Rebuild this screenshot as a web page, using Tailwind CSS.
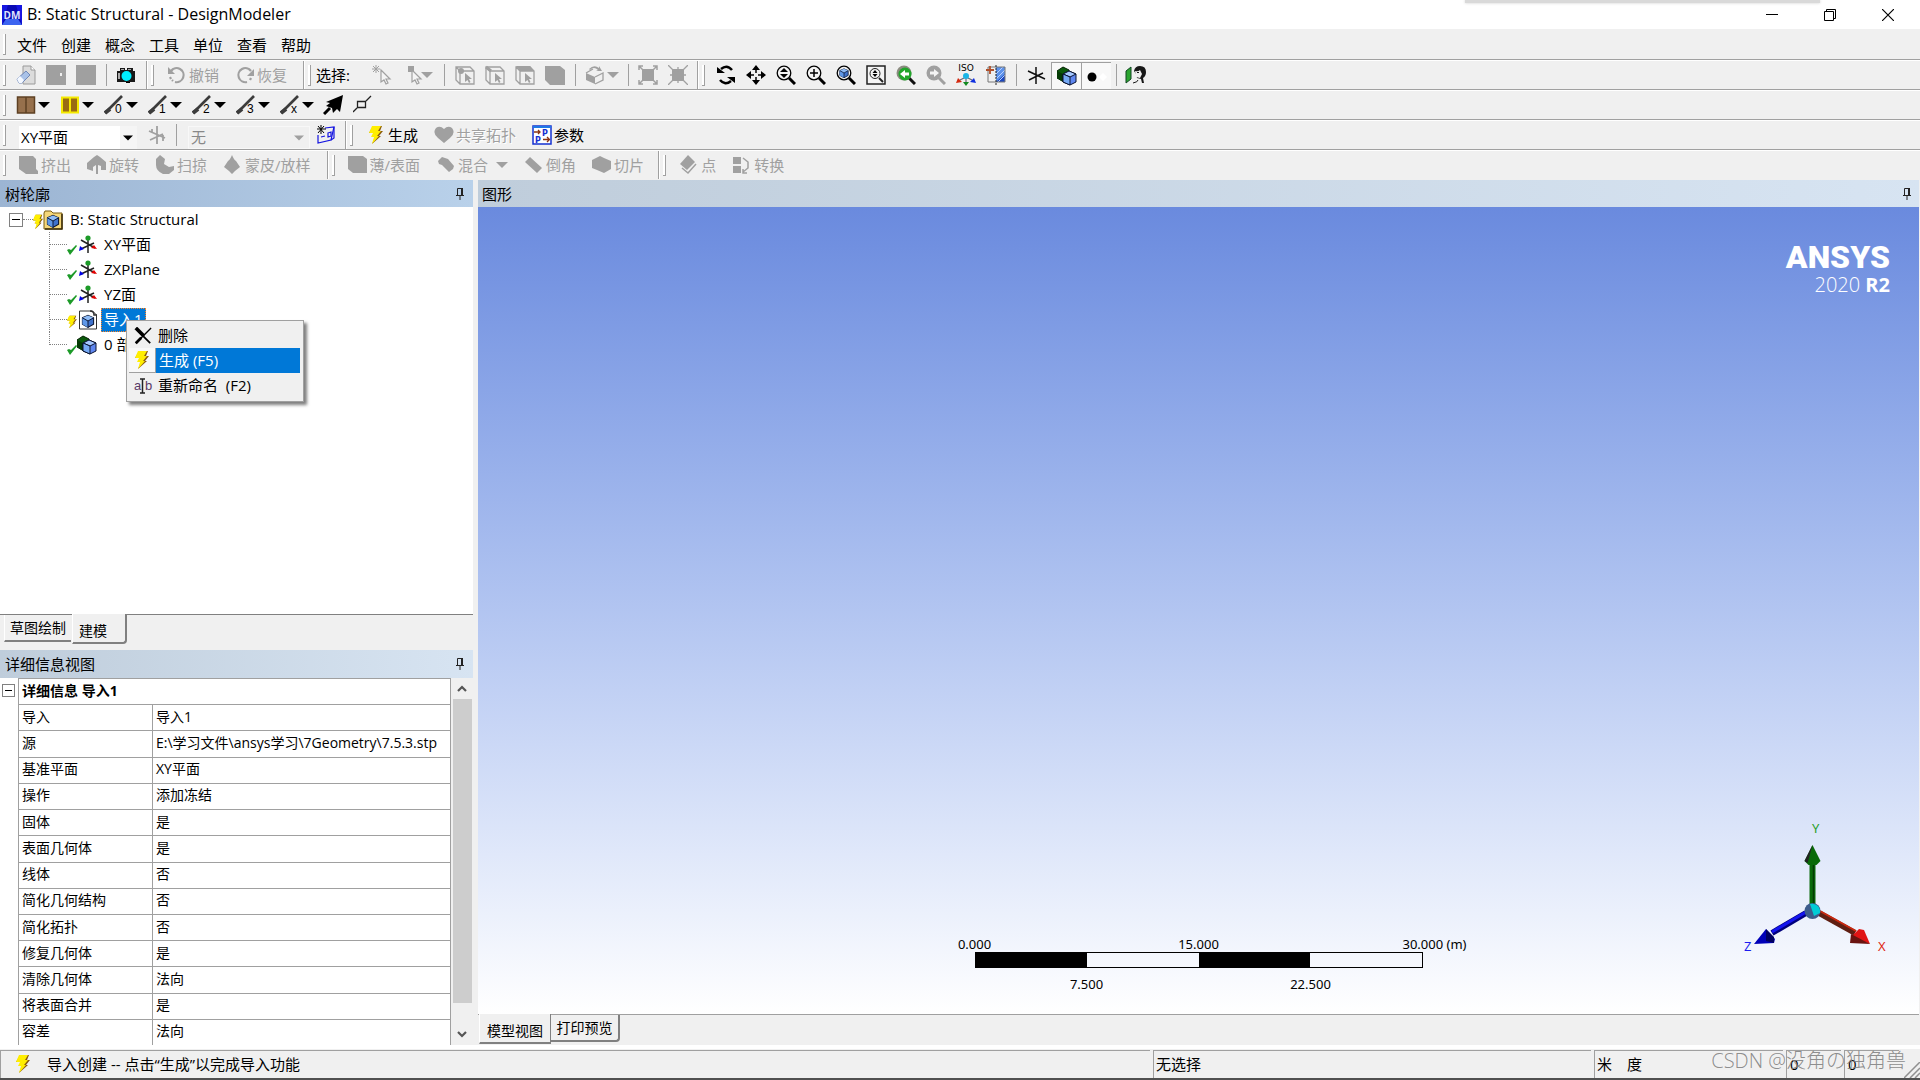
<!DOCTYPE html>
<html lang="zh-CN">
<head>
    <meta charset="UTF-8">
    <title>B: Static Structural - DesignModeler</title>
    <script src="https://cdn.jsdelivr.net/npm/@tailwindcss/browser@4"></script>
</head>

<body class="h-screen overflow-hidden flex flex-col bg-[#f0f0f0] text-black text-[15px] leading-5 font-['Open_Sans','Noto_Sans_CJK_SC',sans-serif] relative">

<!-- Иконки -->
<svg class="hidden">
    <symbol id="bolt" viewBox="0 0 20 20"><path d="M7 1h9l-2 5h3l-4 5h2L6 19l3-7H6l2-4H3z" fill="#8a5a10"/><path d="M6 1h9l-3 5h3l-4 5h2l-7 8 2-7H5l2-4H3z" fill="#ffee00"/></symbol>
    <symbol id="down" viewBox="0 0 12 6"><path d="M0 0h12L6 6z" fill="currentColor"/></symbol>
    <symbol id="pin" viewBox="0 0 10 14"><path d="M2.500 1.500h5v7h-5zM1 8.500h8M5 9v4" fill="none" stroke="#222"/><path d="M6 1h2v7H6z" fill="#222"/></symbol>
    <symbol id="glass" viewBox="0 0 20 20"><path d="M13 13l6 6" stroke="currentColor" stroke-width="3"/><circle cx="8" cy="8" r="6.800" fill="#f4f4f4" stroke="currentColor" stroke-width="1.300"/></symbol>
    <symbol id="slash" viewBox="0 0 20 20"><path d="M1 18l5-5L18 1" fill="none" stroke="#3c3c3c" stroke-width="2.600"/><path d="M1 18l5-4" stroke="#3c3c3c" stroke-width="4"/></symbol>
    <symbol id="cube" viewBox="0 0 20 20"><path d="M3 6l7-3 7 3v8l-7 4-7-4z" fill="#3f72cc" stroke="#0a1430" stroke-width="1.300"/><path d="M3 6l7-3 7 3-7 4z" fill="#8fbcf6"/><path d="M3 6l7 4v8l-7-4z" fill="#5f98e8"/><path d="M3 6l7 4 7-4M10 10v8" fill="none" stroke="#0a1430" stroke-width="1.200"/></symbol>
    <symbol id="bodies" viewBox="0 0 20 20"><path d="M0 5l6-4 6 3v9l-5 3-7-4z" fill="#0b5a0b" stroke="#032003"/><path d="M0 5l6 3v8l-6-4z" fill="#063c06"/><path d="M6 8l6-3 7 3v8l-6 3-7-3z" fill="#5e86ef" stroke="#0a1430"/><path d="M6 8l6-3 7 3-6 3z" fill="#a5c8ff" stroke="#0a1430"/><path d="M6 8l7 3v8l-7-3z" fill="#75a9f5" stroke="#0a1430"/></symbol>
    <symbol id="check" viewBox="0 0 10 10"><path d="M0 5l3 5L10 1 9 0 4 5 2 4z" fill="#1c9a28"/></symbol>
    <symbol id="axes" viewBox="0 0 20 20"><path d="M10 3v15M3 5l14 8M3 14l13-6" stroke="#222" stroke-width="1.500" fill="none"/><circle cx="10" cy="3" r="2.600" fill="#1c9a28"/><path d="M1 16l1-5 4 3z" fill="#0000e6"/><path d="M19 14l-6-1 3-3z" fill="#e60000"/></symbol>
    <symbol id="box" viewBox="0 0 20 20"><path d="M1 2h14l4 4v13H5l-4-4zM1 2l4 4v13M5 6h14" fill="none" stroke="#a0a0a0" stroke-width="1.300"/><path d="M10 8v9l2.500-2 1.500 3 1.500-1-1.500-3h3z" fill="#a0a0a0"/></symbol>
    <symbol id="arrowcur" viewBox="0 0 20 20"><path d="M9 5v12l3-2 2 4 2-1-2-4h4z" fill="#f4f4f4" stroke="#a0a0a0" stroke-width="1.200"/></symbol>
</svg>

<!-- Заголовок окна -->
<header class="flex items-center h-[29px] shrink-0 bg-white pl-[2px] relative">
    <svg class="w-5 h-5" viewBox="0 0 20 20"><path d="M0 0h20v20H0z" fill="#1616e0"/><path d="M6 0h8l6 20H0z" fill="#0a0ab4"/><path d="M0 20l4-6h12l4 6z" fill="#3c64f0"/><text x="10" y="14" text-anchor="middle" font-size="10" font-weight="700" font-family="Open Sans" fill="#dfe4ff">DM</text></svg>
    <h1 class="pl-[5px] pb-[2px] flex-1 text-base leading-5">B: Static Structural - DesignModeler</h1>
    <div class="absolute top-0 left-[76.3%] w-[355px] h-[3px] bg-[#d9d9d9] shadow-[0_0_3px_#ccc]"></div>
    <div class="flex pr-[3px]">
        <button class="w-[58px] h-[29px] flex items-center justify-center" aria-label="最小化"><svg class="w-3 h-3" viewBox="0 0 12 12"><path d="M0 5.500h12" stroke="#000"/></svg></button>
        <button class="w-[58px] h-[29px] flex items-center justify-center" aria-label="还原"><svg class="w-3 h-3" viewBox="0 0 12 12" fill="none" stroke="#000"><path d="M.5 2.500h9v9h-9zM2.500 2.500v-2h9v9h-2"/></svg></button>
        <button class="w-[58px] h-[29px] flex items-center justify-center" aria-label="关闭"><svg class="w-3 h-3" viewBox="0 0 12 12"><path d="M0 0l12 12M12 0L0 12" stroke="#000" stroke-width="1.200"/></svg></button>
    </div>
</header>

<!-- Меню -->
<nav class="flex items-center h-[31px] shrink-0 border-b border-[#a0a0a0] pt-px">
    <div class="w-[17px] pl-[3px]"><div class="w-[3px] h-[21px] border-r border-b border-[#a0a0a0] bg-white"></div></div>
    <div class="flex gap-[14px]">
        <button>文件</button>
        <button>创建</button>
        <button>概念</button>
        <button>工具</button>
        <button>单位</button>
        <button>查看</button>
        <button>帮助</button>
    </div>
</nav>

<!-- Панель 1 -->
<div class="flex h-[30px] shrink-0 border-t border-t-white border-b border-b-[#a0a0a0]">
    <div class="flex items-center border-r border-[#a0a0a0] pr-[5px]">
        <div class="w-[11px] pl-[3px]"><div class="w-[3px] h-[21px] border-r border-b border-[#a0a0a0] bg-white"></div></div>
        <button class="w-[30px] flex justify-center" aria-label="新建"><svg class="w-5 h-5" viewBox="0 0 20 20"><path d="M7 1h8l4 4v14H7z" fill="#dcdcdc" stroke="#9a9a9a"/><path d="M15 1v4h4" fill="#fff" stroke="#9a9a9a"/><path d="M1 14l9-8 4 4-8 8H3z" fill="#a9c2e8" stroke="#7088b8"/><path d="M1 14l3-3 4 4-2 3H3z" fill="#f4f8ff"/></svg></button>
        <button class="w-[30px] flex justify-center" aria-label="保存"><svg class="w-5 h-5" viewBox="0 0 20 20"><path d="M0 0h20v20H0z" fill="#a0a0a0"/><path d="M14 8h2v3h-2z" fill="#eee"/></svg></button>
        <button class="w-[30px] flex justify-center" aria-label="导出"><svg class="w-5 h-5" viewBox="0 0 20 20"><path d="M0 0h20v20H0z" fill="#a0a0a0"/></svg></button>
        <div class="w-[10px] flex justify-center"><div class="w-px h-[22px] bg-[#a0a0a0]"></div></div>
        <button class="w-[30px] flex justify-center" aria-label="截图"><svg class="w-5 h-5" viewBox="0 0 20 20"><path d="M1 6h3V3h5v2h2V3h6v3h2v11H1z" fill="#181818"/><path d="M5 4h3v1H5zM12 4h3v1h-3zM2 8h2v6H2z" fill="#aaa"/><circle cx="10.500" cy="11" r="5" fill="#00f0ff"/><path d="M10 17h4v1h-4z" fill="#000"/></svg></button>
    </div>
    <div class="flex items-center border-l border-l-white border-r border-r-[#a0a0a0] pr-2 text-[#a0a0a0] text-shadow-[1px_1px_0_#fff]">
        <div class="w-[11px] pl-[3px]"><div class="w-[3px] h-[21px] border-r border-b border-[#a0a0a0] bg-white"></div></div>
        <button class="flex items-center gap-[2px] px-2" disabled><svg class="w-5 h-5" viewBox="0 0 20 20" fill="none" stroke="currentColor" stroke-width="2.200"><path d="M4 6a7 7 0 1 1 4 11"/><path d="M1 2v7h7z" fill="currentColor" stroke="none"/><path d="M3 12l1 2M5 15l1 1"/></svg>撤销</button>
        <button class="flex items-center gap-[2px] px-2" disabled><svg class="w-5 h-5" viewBox="0 0 20 20" fill="none" stroke="currentColor" stroke-width="2.200"><path d="M16 6A7 7 0 1 0 12 17"/><path d="M19 4v7h-7z" fill="currentColor" stroke="none"/><path d="M16 13l-1 2"/></svg>恢复</button>
    </div>
    <div class="flex items-center border-l border-l-white border-r border-r-[#a0a0a0] pr-1 text-[#a0a0a0]">
        <div class="w-[11px] pl-[3px]"><div class="w-[3px] h-[21px] border-r border-b border-[#a0a0a0] bg-white"></div></div>
        <span class="w-[51px] text-black">选择:</span>
        <button class="w-[30px] flex justify-center" aria-label="新选择"><svg class="w-5 h-5" viewBox="0 0 20 20"><use href="#arrowcur"/><path d="M4 0v8M0 4h8M1 1l6 6M7 1L1 7" stroke="currentColor"/></svg></button>
        <button class="w-[42px] flex items-center pl-[8px]" aria-label="选择模式"><svg class="w-5 h-5 -mr-1" viewBox="0 0 20 20"><path d="M3 1h6v6H3z" fill="currentColor"/><use href="#arrowcur" x="-2"/></svg><svg class="w-3 h-[6px]"><use href="#down"/></svg></button>
        <div class="w-[11px] flex justify-center"><div class="w-px h-[22px] bg-[#a0a0a0]"></div></div>
        <button class="w-[30px] flex justify-center" aria-label="点"><svg class="w-5 h-5" viewBox="0 0 20 20"><use href="#box"/><circle cx="6" cy="6" r="3" fill="currentColor"/></svg></button>
        <button class="w-[30px] flex justify-center" aria-label="边"><svg class="w-5 h-5" viewBox="0 0 20 20"><use href="#box"/><path d="M1 2l5 4" stroke="currentColor" stroke-width="3"/></svg></button>
        <button class="w-[30px] flex justify-center" aria-label="面"><svg class="w-5 h-5" viewBox="0 0 20 20"><use href="#box"/><path d="M1 1h14l4 5H5z" fill="currentColor"/></svg></button>
        <button class="w-[30px] flex justify-center" aria-label="体"><svg class="w-5 h-5" viewBox="0 0 20 20"><path d="M0 1h15l5 4v15H5l-5-5z" fill="currentColor"/></svg></button>
        <div class="w-[10px] flex justify-center"><div class="w-px h-[22px] bg-[#a0a0a0]"></div></div>
        <button class="w-[43px] flex items-center pl-[5px] gap-[2px]" aria-label="扩展"><svg class="w-5 h-5" viewBox="0 0 20 20"><path d="M1 8l9 4v7l-9-4z" fill="currentColor"/><path d="M1 8l7-4M10 12l8-4v7l-8 4" fill="none" stroke="currentColor" stroke-width="1.300"/><path d="M4 4q5-5 10-1v-2l3 5h-6l2-1q-4-4-8 0z" fill="currentColor"/></svg><svg class="w-3 h-[6px]"><use href="#down"/></svg></button>
        <div class="w-[10px] flex justify-center"><div class="w-px h-[22px] bg-[#a0a0a0]"></div></div>
        <button class="w-[30px] flex justify-center" aria-label="放大选择"><svg class="w-5 h-5" viewBox="0 0 20 20"><path d="M4 4h12v12H4z" fill="currentColor"/><path d="M1 5V1h4M15 1h4v4M19 15v4h-4M5 19H1v-4M1 1l4 4M19 1l-4 4M19 19l-4-4M1 19l4-4" stroke="currentColor" stroke-width="1.500" fill="none"/></svg></button>
        <button class="w-[30px] flex justify-center" aria-label="缩小选择"><svg class="w-5 h-5" viewBox="0 0 20 20"><path d="M4 4h12v12H4z" fill="currentColor"/><path d="M0 0l6 6M20 0l-6 6M20 20l-6-6M0 20l6-6M10 2v16M2 10h16" stroke="currentColor" stroke-width="1.300"/></svg></button>
    </div>
    <div class="flex items-center border-l border-l-white">
        <div class="w-[12px] pl-[3px]"><div class="w-[3px] h-[21px] border-r border-b border-[#a0a0a0] bg-white"></div></div>
        <button class="w-[30px] flex justify-center" aria-label="旋转"><svg class="w-5 h-5" viewBox="0 0 20 20"><path d="M16 5Q11-1 5 4M4 15q5 6 11 1" fill="none" stroke="#000" stroke-width="2.500"/><path d="M1 2v6h8zM19 18v-6h-8z"/></svg></button>
        <button class="w-[30px] flex justify-center" aria-label="平移"><svg class="w-5 h-5" viewBox="0 0 20 20"><path d="M10 0l4 5H6zM10 20l4-5H6zM0 10l5-4v8zM20 10l-5-4v8z"/><path d="M10 4v4M10 12v4M4 10h4M12 10h4" stroke="#000" stroke-width="1.500"/></svg></button>
        <button class="w-[30px] flex justify-center" aria-label="缩放"><svg class="w-5 h-5" viewBox="0 0 20 20"><use href="#glass"/><path d="M8 3l4 4H4zM8 13l4-4H4z"/></svg></button>
        <button class="w-[30px] flex justify-center" aria-label="放大"><svg class="w-5 h-5" viewBox="0 0 20 20"><use href="#glass"/><path d="M8 4v8M4 8h8" stroke="#000" stroke-width="1.500"/></svg></button>
        <button class="w-[30px] flex justify-center" aria-label="缩放至适合"><svg class="w-5 h-5" viewBox="0 0 20 20"><use href="#glass"/><use href="#cube" x="2" y="2" width="12" height="12"/></svg></button>
        <button class="w-[30px] flex justify-center" aria-label="放大镜窗口"><svg class="w-5 h-5" viewBox="0 0 20 20"><path d="M1 1h18v18H1z" fill="#f4f4f4" stroke="#222" stroke-width="1.500"/><circle cx="9" cy="8.500" r="5" fill="none" stroke="#222"/><path d="M13 13l4 4" stroke="#222" stroke-width="2"/><path d="M9 5l2.500 3h-5zM9 12l2.500-3h-5z"/></svg></button>
        <button class="w-[30px] flex justify-center" aria-label="上一视图"><svg class="w-5 h-5" viewBox="0 0 20 20"><path d="M13 13l6 6" stroke="#111" stroke-width="3"/><circle cx="8" cy="8" r="7.500" fill="#8c8c80"/><circle cx="9" cy="9" r="6.500" fill="#21a52b"/><path d="M4 9l5-4v2.500h4v3H9V13z" fill="#fff"/></svg></button>
        <button class="w-[30px] flex justify-center" aria-label="下一视图"><svg class="w-5 h-5" viewBox="0 0 20 20"><path d="M13 13l6 6" stroke="#a0a0a0" stroke-width="3"/><circle cx="8" cy="8" r="7.500" fill="#a0a0a0"/><path d="M13 8L8 4v2.500H4v3h4V12z" fill="#f4f4f4"/></svg></button>
        <button class="w-[30px] flex justify-center" aria-label="等轴测"><svg class="w-5 h-5 overflow-visible" viewBox="0 0 20 20"><text x="10" y="6" text-anchor="middle" font-size="9" font-family="DejaVu Sans">ISO</text><path d="M10 12v6M10 12l-6 3M10 12l6 3" stroke="#667" stroke-width="1.200"/><circle cx="10" cy="11" r="3" fill="#19b5e6"/><path d="M0 18l2-5 4 4z" fill="#d42a10"/><path d="M20 18l-2-5-4 4z" fill="#1030e0"/><path d="M7 17h6l-3 4z" fill="#138a20"/></svg></button>
        <button class="w-[30px] flex justify-center" aria-label="查看面"><svg class="w-5 h-5" viewBox="0 0 20 20"><path d="M10 2h9v15h-9z" fill="#5d92ea"/><path d="M10 17l9-8v8z" fill="#1c48c0"/><path d="M10 9l7-7M10 14l9-9M12 17l7-7" stroke="#b9d0ff"/><path d="M2 2h17v15H2z" fill="none" stroke="#777"/><path d="M10 0v20" stroke="#222" stroke-dasharray="2 1"/><path d="M4 1v8M0 5h8" stroke="#b0502c" stroke-width="1.800"/></svg></button>
        <div class="w-[10px] flex justify-center"><div class="w-px h-[22px] bg-[#a0a0a0]"></div></div>
        <button class="w-[30px] flex justify-center" aria-label="显示平面"><svg class="w-5 h-5" viewBox="0 0 20 20"><path d="M10 2v17M2 6l17 8M3 15l14-7" stroke="#111" stroke-width="1.500"/></svg></button>
        <button class="w-[30px] h-[27px] flex justify-center items-center border-l border-t border-[#a0a0a0] bg-[#f8f8f8]" aria-label="显示模型"><svg class="w-5 h-5"><use href="#bodies"/></svg></button>
        <button class="w-[30px] h-[27px] flex justify-center items-center border-l border-t border-[#a0a0a0] bg-[#f8f8f8]" aria-label="显示点"><svg class="w-5 h-5" viewBox="0 0 20 20"><circle cx="5" cy="11" r="4.500"/><path d="M16 7l4 4-4 4-4-4z" fill="#fff"/></svg></button>
        <div class="w-[10px] flex justify-center"><div class="w-px h-[22px] bg-[#a0a0a0]"></div></div>
        <button class="w-[30px] flex justify-center" aria-label="注视"><svg class="w-[22px] h-5" viewBox="0 0 22 20"><path d="M1 6l5-4v12l-5 4z" fill="#2aa52f" stroke="#142"/><path d="M9 6q1-5 6-5 6 0 6 6 0 4-3 6l1 5h-2l-1-4-4-1-1-4z" fill="#181818"/><path d="M10 6q3 1 5-1l2 4-2 4-4-1z" fill="#f0f0f0"/><path d="M12 7.500h2M8 18q5-1 5-3" stroke="#181818" fill="none"/></svg></button>
    </div>
</div>

<!-- Панель 2 -->
<div class="flex items-center h-[30px] shrink-0 border-t border-t-white border-b border-b-[#a0a0a0]">
    <div class="w-[11px] pl-[3px]"><div class="w-[3px] h-[21px] border-r border-b border-[#a0a0a0] bg-white"></div></div>
    <button class="w-[44px] flex items-center pl-[5px] gap-[2px]" aria-label="面颜色"><svg class="w-5 h-5" viewBox="0 0 20 20"><path d="M1.500 2h17v16h-17zM10 2v16" fill="#96704c" stroke="#5e4023" stroke-width="1.500"/></svg><svg class="w-3 h-[6px]"><use href="#down"/></svg></button>
    <button class="w-[44px] flex items-center pl-[5px] gap-[2px]" aria-label="边颜色"><svg class="w-5 h-5" viewBox="0 0 20 20"><path d="M2 2.500h16v15H2z" fill="#9a6c12" stroke="#f5ea00" stroke-width="2"/><path d="M10 2v16" stroke="#f5ea00" stroke-width="2"/></svg><svg class="w-3 h-[6px]"><use href="#down"/></svg></button>
    <button class="w-[44px] flex items-center pl-[5px] gap-[2px]" aria-label="边 0"><svg class="w-5 h-5 overflow-visible" viewBox="0 0 20 20"><use href="#slash"/><text x="11" y="18" font-size="12" font-family="Liberation Sans">0</text></svg><svg class="w-3 h-[6px]"><use href="#down"/></svg></button>
    <button class="w-[44px] flex items-center pl-[5px] gap-[2px]" aria-label="边 1"><svg class="w-5 h-5 overflow-visible" viewBox="0 0 20 20"><use href="#slash"/><text x="11" y="18" font-size="12" font-family="Liberation Sans">1</text></svg><svg class="w-3 h-[6px]"><use href="#down"/></svg></button>
    <button class="w-[44px] flex items-center pl-[5px] gap-[2px]" aria-label="边 2"><svg class="w-5 h-5 overflow-visible" viewBox="0 0 20 20"><use href="#slash"/><text x="11" y="18" font-size="12" font-family="Liberation Sans">2</text></svg><svg class="w-3 h-[6px]"><use href="#down"/></svg></button>
    <button class="w-[44px] flex items-center pl-[5px] gap-[2px]" aria-label="边 3"><svg class="w-5 h-5 overflow-visible" viewBox="0 0 20 20"><use href="#slash"/><text x="11" y="18" font-size="12" font-family="Liberation Sans">3</text></svg><svg class="w-3 h-[6px]"><use href="#down"/></svg></button>
    <button class="w-[43px] flex items-center pl-[5px] gap-[2px]" aria-label="边 x"><svg class="w-5 h-5 overflow-visible" viewBox="0 0 20 20"><use href="#slash"/><text x="11" y="18" font-size="12" font-family="Liberation Sans">x</text></svg><svg class="w-3 h-[6px]"><use href="#down"/></svg></button>
    <button class="w-[30px] flex justify-center" aria-label="边方向"><svg class="w-5 h-5" viewBox="0 0 20 20"><path d="M1 19l6-6" stroke="#000" stroke-width="3"/><path d="M20 0l-3 17-3-3-4 4-1-5-6-2 4-3-4-1z"/></svg></button>
    <button class="w-[30px] flex justify-center" aria-label="顶点"><svg class="w-5 h-5" viewBox="0 0 20 20"><path d="M4.500 6.500h8v6h-8zM13 6l5-5M4 13l-4 4" fill="none" stroke="#222" stroke-width="1.300"/></svg></button>
</div>

<!-- Панель 3 -->
<div class="flex h-[30px] shrink-0 border-t border-t-white border-b border-b-[#a0a0a0]">
    <div class="flex items-center border-r border-[#a0a0a0] pr-1">
        <div class="w-[19px] pl-[3px]"><div class="w-[3px] h-[21px] border-r border-b border-[#a0a0a0] bg-white"></div></div>
        <div class="relative w-[118px] h-[23px] mt-1">
            <select class="appearance-none w-full h-full pl-[2px] bg-linear-to-r from-white from-86% to-[#f5f5f5] to-86% leading-[23px]" aria-label="平面">
                <option>XY平面</option>
            </select>
            <svg class="absolute right-[4px] top-[9px] w-[10px] h-[6px] pointer-events-none"><use href="#down"/></svg>
        </div>
        <button class="w-[39px] flex justify-center text-[#a0a0a0]" aria-label="新平面"><svg class="w-5 h-5" viewBox="0 0 20 20"><path d="M10 1v18M2 6l16 7M3 15l13-6M5 4v4M16 10v6" stroke="currentColor" stroke-width="1.800"/></svg></button>
        <div class="w-px h-[22px] mr-[11px] bg-[#a0a0a0]"></div>
        <div class="relative w-[122px] h-[23px] mt-1 text-[#888]">
            <select class="appearance-none w-full h-full pl-[2px] border border-[#f8f8f8] leading-[21px]" aria-label="草图" disabled>
                <option>无</option>
            </select>
            <svg class="absolute right-[6px] top-[9px] w-[10px] h-[6px] pointer-events-none text-[#a0a0a0]"><use href="#down"/></svg>
        </div>
        <button class="w-[31px] flex justify-center" aria-label="新草图"><svg class="w-5 h-5" viewBox="0 0 20 20"><path d="M2 10v8l13-3 3-13-9 1" fill="none" stroke="#1414e0" stroke-width="1.200"/><path d="M18 2v11l-3 2" fill="none" stroke="#1414e0" stroke-width="1.200"/><path d="M5 12l4-1M12 8l3-1v4l-3 1z" fill="none" stroke="#1414e0" stroke-width="1.200"/><path d="M5 0v9M1 4h9M2 1l6 7M8 1L2 8" stroke="#000"/></svg></button>
    </div>
    <div class="flex items-center border-l border-l-white">
        <div class="w-[11px] pl-[3px]"><div class="w-[3px] h-[21px] border-r border-b border-[#a0a0a0] bg-white"></div></div>
        <button class="flex items-center gap-[2px] px-2"><svg class="w-5 h-5"><use href="#bolt"/></svg>生成</button>
        <button class="flex items-center gap-[2px] px-2 text-[#a0a0a0] text-shadow-[1px_1px_0_#fff]" disabled><svg class="w-5 h-5" viewBox="0 0 20 20"><path d="M10 4q4-4 8-1 4 5-2 10l-6 5-6-5Q-2 8 2 3q4-3 8 1z" fill="currentColor"/></svg>共享拓扑</button>
        <button class="flex items-center gap-[2px] px-2"><svg class="w-5 h-5" viewBox="0 0 20 20"><path d="M1 1h18v18H1z" fill="#fff" stroke="#1430d0" stroke-width="1.500"/><path d="M1 1h18v2H1z" fill="#1e78e6"/><path d="M2 7h6M6 5l2 2-2 2M11 14.500h6M15 12l2.500 2.500L15 17" fill="none" stroke="#8a3412" stroke-width="1.300"/><text x="10" y="10.500" font-size="8" font-weight="700" font-family="DejaVu Sans" fill="#1430d0">P</text><text x="3" y="18" font-size="8" font-weight="700" font-family="DejaVu Sans" fill="#1430d0">P</text></svg>参数</button>
    </div>
</div>

<!-- Панель 4 -->
<div class="flex h-[30px] shrink-0 border-t border-t-white text-[#a0a0a0] text-shadow-[1px_1px_0_#fff] pb-px">
    <div class="flex items-center border-r border-[#a0a0a0] pr-2">
        <div class="w-[11px] pl-[3px]"><div class="w-[3px] h-[21px] border-r border-b border-[#a0a0a0] bg-white"></div></div>
        <button class="flex items-center gap-[2px] px-2" disabled><svg class="w-5 h-5" viewBox="0 0 20 20"><path d="M0 1h14l3 3v10l2 2v3H7l-7-5z" fill="currentColor"/></svg>挤出</button>
        <button class="flex items-center gap-[2px] px-2" disabled><svg class="w-5 h-5" viewBox="0 0 20 20"><path d="M0 14V8l7-6 3-2 3 2 6 5v8h-5v-4l-3-1v9H9v-9l-3 2v4z" fill="currentColor"/></svg>旋转</button>
        <button class="flex items-center gap-[2px] px-2" disabled><svg class="w-5 h-5" viewBox="0 0 20 20"><path d="M1 4l4-4 5 4-1 5 5 3 5-1v4l-5 4H8q-7-3-7-9z" fill="currentColor"/></svg>扫掠</button>
        <button class="flex items-center gap-[2px] px-2" disabled><svg class="w-5 h-5" viewBox="0 0 20 20"><path d="M9 0q2 5 4 6l4 6-5 4-3 3-3-3-5-4 4-6q2-1 4-6z" fill="currentColor"/></svg>蒙皮/放样</button>
    </div>
    <div class="flex items-center border-l border-l-white border-r border-r-[#a0a0a0] pr-[6px]">
        <div class="w-[11px] pl-[3px]"><div class="w-[3px] h-[21px] border-r border-b border-[#a0a0a0] bg-white"></div></div>
        <button class="flex items-center gap-[2px] px-2" disabled><svg class="w-5 h-5" viewBox="0 0 20 20"><path d="M0 1h15l4 3v14H5l-5-4z" fill="currentColor"/></svg>薄/表面</button>
        <button class="flex items-center gap-[2px] px-2" disabled><svg class="w-5 h-5" viewBox="0 0 20 20"><path d="M2 6l4-4 6 2 6 7-1 3-4 3-7-7-3-1z" fill="currentColor"/></svg>混合<svg class="w-3 h-[6px] ml-[6px]"><use href="#down"/></svg></button>
        <button class="flex items-center gap-[2px] px-2" disabled><svg class="w-5 h-5" viewBox="0 0 20 20"><path d="M1 7l5-5 12 11-5 5z" fill="currentColor"/></svg>倒角</button>
        <button class="flex items-center gap-[2px] px-2" disabled><svg class="w-5 h-5" viewBox="0 0 20 20"><path d="M0 5l8-4 4 2 7 3v8l-7 4-7-3-5-2z" fill="currentColor"/></svg>切片</button>
    </div>
    <div class="flex items-center border-l border-l-white">
        <div class="w-[11px] pl-[3px]"><div class="w-[3px] h-[21px] border-r border-b border-[#a0a0a0] bg-white"></div></div>
        <button class="flex items-center gap-[2px] px-2" disabled><svg class="w-5 h-5" viewBox="0 0 20 20"><path d="M9 0l7 7-8 8-7-6z" fill="currentColor"/><path d="M17 9l-8 9-6-5" fill="none" stroke="currentColor" stroke-width="1.500"/></svg>点</button>
        <button class="flex items-center gap-[2px] px-2" disabled><svg class="w-5 h-5" viewBox="0 0 20 20"><path d="M1 2h8v7H1zM1 11h8v7H1z" fill="currentColor"/><path d="M11 3l5 4v6l-5 4M11 14v4h4" fill="none" stroke="currentColor" stroke-width="1.500"/></svg>转换</button>
    </div>
</div>

<main class="flex flex-1 min-h-0 gap-[5px] pr-px">
    <!-- Левая колонка -->
    <aside class="w-[473px] shrink-0 flex flex-col">
        <section class="flex flex-col flex-1 min-h-0">
            <div class="flex items-center justify-between h-[27px] shrink-0 px-[5px] pr-2 bg-linear-to-r from-[#9cb5d3] to-[#b9d1ea]">
                <h2>树轮廓</h2>
                <button aria-label="固定"><svg class="w-[10px] h-[14px]"><use href="#pin"/></svg></button>
            </div>
            <div class="relative flex-1 bg-white">
                <div class="flex items-center h-[25px] pl-[9px]">
                    <button class="w-[14px] h-[14px] border border-[#808080] flex items-center justify-center" aria-label="折叠"><span class="w-2 h-px bg-black"></span></button>
                    <span class="w-[10px] border-t border-dotted border-[#808080]"></span>
                    <svg class="w-[10px] h-4 mt-1" viewBox="3 0 14 20" preserveAspectRatio="none"><use href="#bolt" width="20" height="20"/></svg>
                    <svg class="w-5 h-5" viewBox="0 0 20 20"><path d="M1 3l1-2h6l2 2h9v16H1z" fill="#f5d77a" stroke="#7a5c12"/><path d="M2 19h17V4" fill="none" stroke="#3a2c08" stroke-width="1.500"/><use href="#cube" x="2" y="3" width="16" height="16"/></svg>
                    <span class="pl-[7px] pb-[2px]">B: Static Structural</span>
                </div>
                <ul class="pl-[49px]">
                    <li class="flex items-center h-[25px] border-l border-dotted border-[#808080]">
                        <span class="w-[17px] border-t border-dotted border-[#808080]"></span>
                        <svg class="w-[10px] h-[10px] mt-[10px] mr-px"><use href="#check"/></svg>
                        <svg class="w-5 h-5"><use href="#axes"/></svg>
                        <span class="pl-[6px] pb-[2px]">XY平面</span>
                    </li>
                    <li class="flex items-center h-[25px] border-l border-dotted border-[#808080]">
                        <span class="w-[17px] border-t border-dotted border-[#808080]"></span>
                        <svg class="w-[10px] h-[10px] mt-[10px] mr-px"><use href="#check"/></svg>
                        <svg class="w-5 h-5"><use href="#axes"/></svg>
                        <span class="pl-[6px] pb-[2px]">ZXPlane</span>
                    </li>
                    <li class="flex items-center h-[25px] border-l border-dotted border-[#808080]">
                        <span class="w-[17px] border-t border-dotted border-[#808080]"></span>
                        <svg class="w-[10px] h-[10px] mt-[10px] mr-px"><use href="#check"/></svg>
                        <svg class="w-5 h-5"><use href="#axes"/></svg>
                        <span class="pl-[6px] pb-[2px]">YZ面</span>
                    </li>
                    <li class="flex items-center h-[25px] border-l border-dotted border-[#808080]">
                        <span class="w-[17px] border-t border-dotted border-[#808080]"></span>
                        <svg class="w-[10px] h-[14px] mt-1 mr-px" viewBox="3 0 14 20" preserveAspectRatio="none"><use href="#bolt" width="20" height="20"/></svg>
                        <svg class="w-5 h-5" viewBox="0 0 20 20"><path d="M1.500 1h13l4 4v14h-17z" fill="#fff" stroke="#333"/><path d="M12 1q4 0 4 4h3" fill="none" stroke="#333" stroke-width="1.500"/><use href="#cube" x="2" y="3" width="16" height="16"/></svg>
                        <span class="ml-[3px] px-[2px] h-6 leading-[21px] bg-[#0078d7] text-white border border-dotted border-[#ff8728]">导入1</span>
                    </li>
                    <li class="flex items-center h-[25px]">
                        <span class="self-start w-[18px] h-[13px] border-l border-b border-dotted border-[#808080]"></span>
                        <svg class="w-[10px] h-[10px] mt-[10px]"><use href="#check"/></svg>
                        <svg class="w-5 h-5"><use href="#bodies"/></svg>
                        <span class="pl-[7px] pb-[2px]">0 部件</span>
                    </li>
                </ul>

                <!-- Контекстное меню -->
                <div class="absolute z-10 left-[126px] top-[113px] w-[178px] p-[2px] pb-[3px] bg-[#f0f0f0] border border-[#a0a0a0] shadow-[3px_3px_3px_rgba(0,0,0,0.5)]">
                    <button class="flex items-center w-full h-[25px]"><span class="w-[27px] flex justify-center"><svg class="w-[18px] h-[18px]" viewBox="0 0 20 20"><path d="M3 3l15 15" stroke="#000" stroke-width="2"/><path d="M2 1l9 9" stroke="#000" stroke-width="4"/><path d="M19 1L2 18" stroke="#000" stroke-width="1.500"/><path d="M8 12l-6 6" stroke="#000" stroke-width="3"/></svg></span><span class="pl-[2px] pb-[2px]">删除</span></button>
                    <button class="flex items-center w-full h-[25px]"><span class="w-[27px] h-full flex items-center justify-center bg-[#f8f8f8] border-r border-b border-[#a0a0a0]"><svg class="w-5 h-5"><use href="#bolt"/></svg></span><span class="flex-1 text-left h-full leading-[25px] pl-[3px] mr-px bg-[#0078d7] text-white">生成 (F5)</span></button>
                    <button class="flex items-center w-full h-[25px]"><span class="w-[27px] flex justify-center"><svg class="w-5 h-5" viewBox="0 0 20 20"><text x="1" y="14" font-size="13" font-family="Liberation Sans" fill="#5a3a68">a</text><text x="12" y="14" font-size="13" font-family="Liberation Sans" fill="#5a3a68">b</text><path d="M7 3h5M7 17h5M9.500 3v14" stroke="#222" stroke-width="1.500"/></svg></span><span class="pl-[2px] pb-[2px]">重新命名&nbsp; (F2)</span></button>
                </div>
            </div>
            <div class="flex items-start h-9 shrink-0 border-t border-[#808080] pl-1 text-sm">
                <button class="w-[67px] h-[27px] pt-px border-l border-l-white border-b-2 border-b-[#808080]">草图绘制</button>
                <button class="w-[55px] h-[30px] pr-[12px] -mt-px pt-[5px] ml-px bg-[#f0f0f0] border-l border-l-white border-r-2 border-b-2 border-r-[#808080] border-b-[#808080] rounded-br-sm">建模</button>
            </div>
        </section>

        <section class="h-[395px] shrink-0 flex flex-col">
            <div class="flex items-center justify-between h-7 shrink-0 px-[5px] pr-2 bg-linear-to-r from-[#bfcddb] to-[#d7e4f2]">
                <h2>详细信息视图</h2>
                <button aria-label="固定"><svg class="w-[10px] h-[14px]"><use href="#pin"/></svg></button>
            </div>
            <div class="flex flex-1 min-h-0 bg-white">
                <div class="w-[18px] pl-[2px] pt-[6px]">
                    <button class="w-[13px] h-[13px] border border-[#808080] flex items-center justify-center" aria-label="折叠"><span class="w-[7px] h-px bg-black"></span></button>
                </div>
                <table class="flex-1 h-full border-collapse text-sm leading-5 [&_td]:border [&_td]:border-[#a0a0a0] [&_td]:pl-[3px] [&_td]:pt-0 [&_td]:pb-[2px] [&_tr:last-child_td]:border-b-0">
                    <tbody>
                    <tr><th colspan="2" class="border border-[#a0a0a0] pl-[3px] pt-0 pb-[2px] text-left font-bold">详细信息 导入1</th></tr>
                    <tr><td class="w-[134px]">导入</td><td>导入1</td></tr>
                    <tr><td>源</td><td>E:\学习文件\ansys学习\7Geometry\7.5.3.stp</td></tr>
                    <tr><td>基准平面</td><td>XY平面</td></tr>
                    <tr><td>操作</td><td>添加冻结</td></tr>
                    <tr><td>固体</td><td>是</td></tr>
                    <tr><td>表面几何体</td><td>是</td></tr>
                    <tr><td>线体</td><td>否</td></tr>
                    <tr><td>简化几何结构</td><td>否</td></tr>
                    <tr><td>简化拓扑</td><td>否</td></tr>
                    <tr><td>修复几何体</td><td>是</td></tr>
                    <tr><td>清除几何体</td><td>法向</td></tr>
                    <tr><td>将表面合并</td><td>是</td></tr>
                    <tr><td>容差</td><td>法向</td></tr>
                    </tbody>
                </table>
                <div class="w-[22px] flex flex-col items-center bg-[#f0f0f0]">
                    <button class="h-[21px]" aria-label="向上"><svg class="w-[10px] h-[7px]" viewBox="0 0 10 7"><path d="M1 6l4-4 4 4" fill="none" stroke="#555" stroke-width="2.200"/></svg></button>
                    <div class="w-[19px] flex-1 bg-[#cdcdcd]"></div>
                    <button class="h-[42px] pt-5" aria-label="向下"><svg class="w-[10px] h-[7px]" viewBox="0 0 10 7"><path d="M1 1l4 4 4-4" fill="none" stroke="#555" stroke-width="2.200"/></svg></button>
                </div>
            </div>
        </section>
    </aside>

    <!-- Графика -->
    <section class="flex-1 min-w-0 flex flex-col">
        <div class="flex items-center justify-between h-[27px] shrink-0 pl-1 pr-[7px] bg-linear-to-r from-[#bfcddb] to-[#d7e4f2]">
            <h2>图形</h2>
            <button aria-label="固定"><svg class="w-[10px] h-[14px]"><use href="#pin"/></svg></button>
        </div>
        <div class="relative flex-1 bg-linear-to-b from-[#6a8ade] to-white">
            <div class="absolute top-[30px] right-[29px] text-right text-white">
                <div class="font-[Roboto,sans-serif] font-black text-[32px] leading-10">ANSYS</div>
                <div class="text-[20px] leading-6 -mt-1 font-light">2020 <b class="font-bold">R2</b></div>
            </div>

            <!-- Масштабная линейка -->
            <div class="absolute bottom-[22px] left-1/2 -translate-x-1/2 w-[448px] text-[13px] leading-4 font-['Noto_Sans',sans-serif]">
                <div class="relative h-4">
                    <span class="absolute left-0 -translate-x-1/2">0.000</span>
                    <span class="absolute left-1/2 -translate-x-1/2">15.000</span>
                    <span class="absolute left-full -translate-x-[20px] whitespace-nowrap">30.000 (m)</span>
                </div>
                <div class="grid grid-cols-4 h-4 border border-black">
                    <div class="bg-black"></div>
                    <div></div>
                    <div class="bg-black"></div>
                    <div></div>
                </div>
                <div class="grid grid-cols-2 pt-2 text-center">
                    <span>7.500</span>
                    <span>22.500</span>
                </div>
            </div>

            <!-- Оси координат -->
            <svg class="absolute right-[29px] bottom-[49px] w-[150px] h-[150px]" viewBox="0 0 150 150" font-family="Noto Sans" font-size="13">
                <path d="M66 98L32 118" stroke="#00007c" stroke-width="6"/>
                <path d="M66 97L32 117" stroke="#1414f0" stroke-width="3"/>
                <path d="M14 129L26 114 35 124 34 128z" fill="#0000b8"/><path d="M26 114l8 8v6l-8-2z" fill="#000060"/>
                <path d="M79 98l36 20" stroke="#5e1e12" stroke-width="6"/>
                <path d="M80 96l36 20" stroke="#c8280f" stroke-width="2"/>
                <path d="M119 114l5 1 6 14-19-7z" fill="#e01414"/><path d="M111 119l19 10-20-1z" fill="#6a1410"/>
                <path d="M72.500 92V48" stroke="#0a6a0a" stroke-width="6"/><path d="M73.500 92V48" stroke="#043c04" stroke-width="1.500"/>
                <path d="M72.500 30l8 16-4 4h-8l-4-4z" fill="#086a08"/><path d="M72.500 30l-5 18-3-2z" fill="#222"/>
                <circle cx="72.500" cy="96" r="8" fill="#3c5c8c"/><path d="M70 89a8 8 0 0 1 10 9l-6 3z" fill="#00ccd6"/>
                <text x="72" y="18" fill="#2ca02c">Y</text>
                <text x="4" y="136" fill="#1c1cf0">Z</text>
                <text x="138" y="136" fill="#e02810">X</text>
            </svg>
        </div>
        <div class="flex items-start h-[31px] shrink-0 border-t border-[#a0a0a0] pl-px text-sm">
            <button class="w-[72px] h-[30px] -mt-px pt-[5px] bg-[#f0f0f0] border-l border-l-white border-r border-b-2 border-r-[#808080] border-b-[#808080]">模型视图</button>
            <button class="w-[69px] h-[27px] pt-px border-r-2 border-b-2 border-[#808080] rounded-br-sm">打印预览</button>
        </div>
    </section>
</main>

<!-- Строка состояния -->
<footer class="flex h-[35px] shrink-0 gap-[3px] pr-[21px] border-t-4 border-t-white border-b-2 border-b-[#505050] relative [&>div]:mt-px [&>div]:border-l [&>div]:border-t [&>div]:border-[#a0a0a0] [&>div]:flex [&>div]:items-center [&>div]:pb-[2px]">
    <div class="flex-1 pl-3"><svg class="w-5 h-5"><use href="#bolt"/></svg><span class="pl-[14px]">导入创建 -- 点击“生成”以完成导入功能</span></div>
    <div class="w-[438px] pl-[2px]">无选择</div>
    <div class="w-[189px] pl-[2px] gap-[15px]"><span>米</span><span>度</span></div>
    <div class="w-[55px] pl-[3px]">0</div>
    <div class="w-[55px] pl-[3px]">0</div>
    <svg class="absolute right-0 bottom-0 w-4 h-4" viewBox="0 0 16 16"><path d="M0 16L16 0M6 16L16 6M11 16l5-5" stroke="#909090" stroke-width="1.500"/></svg>
</footer>
<p class="absolute right-[14px] bottom-[7px] text-[20px] leading-6 font-light text-[#808080]/90 pointer-events-none">CSDN @没角の独角兽</p>

</body>
</html>
